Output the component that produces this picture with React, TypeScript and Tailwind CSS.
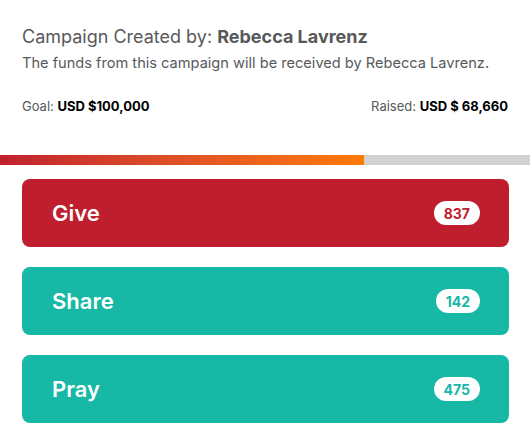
const actions = [
  { label: 'Give', count: 837, bg: 'bg-[#be1e2d]', text: 'text-[#be1e2d]' },
  { label: 'Share', count: 142, bg: 'bg-[#17b8a6]', text: 'text-[#17b8a6]' },
  { label: 'Pray', count: 475, bg: 'bg-[#17b8a6]', text: 'text-[#17b8a6]' },
]

export default function App() {
  const raised = 68660
  const goal = 100000
  const pct = (raised / goal) * 100

  return (
    <div className="min-h-screen bg-white font-['Inter',sans-serif]">
      <div className="pl-[22px] pr-[22px] pt-[25px]">
        <h1 className="text-[18px] leading-[24px] text-[#58595b]">
          Campaign Created by: <span className="font-bold">Rebecca Lavrenz</span>
        </h1>
        <p className="mt-[4px] text-[14.6px] leading-[20px] text-[#58595b]">
          The funds from this campaign will be received by Rebecca Lavrenz.
        </p>
        <div className="mt-[24px] flex items-center justify-between text-[13px] leading-[18px]">
          <span className="text-[#58595b]">
            Goal: <span className="font-bold text-black">USD $100,000</span>
          </span>
          <span className="text-[#58595b]">
            Raised: <span className="font-bold text-black">USD $ 68,660</span>
          </span>
        </div>
      </div>

      <div className="mt-[40px] h-[10px] w-full bg-[#d2d2d2]">
        <div
          className="h-full bg-gradient-to-r from-[#c0202e] to-[#ff7a00]"
          style={{ width: pct + '%' }}
        />
      </div>

      <div className="flex flex-col gap-[20px] pl-[22px] pr-[21px] pt-[14px]">
        {actions.map((a) => (
          <button
            key={a.label}
            className={`flex h-[68px] items-center justify-between rounded-[8px] pl-[30px] pr-[29px] ${a.bg}`}
          >
            <span className="text-[22px] font-semibold text-white">{a.label}</span>
            <span
              className={`flex h-[24px] min-w-[44px] items-center justify-center rounded-full bg-white px-[10px] text-[14px] font-bold ${a.text}`}
            >
              {a.count}
            </span>
          </button>
        ))}
      </div>
    </div>
  )
}
